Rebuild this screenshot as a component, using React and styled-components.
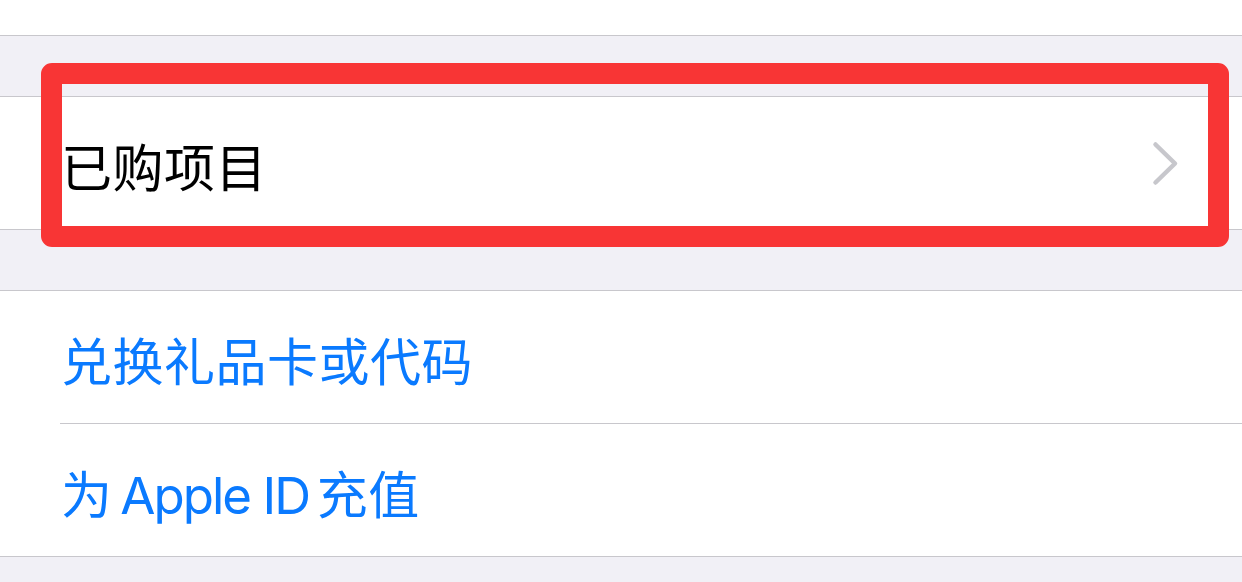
import React from "react";
import styled, { createGlobalStyle } from "styled-components";

const GlobalStyle = createGlobalStyle`
	html, body {
		margin: 0;
		padding: 0;
		background: #f1f0f6;
		font-family: "Inter", "Noto Sans CJK SC", sans-serif;
	}
`;

const Latin = styled.span`
	letter-spacing: -2px;
	word-spacing: normal;
`;

const rows = [
	{ id: "redeem", label: "兑换礼品卡或代码" },
	{
		id: "topup",
		label: (
			<>
				为 <Latin>Apple ID</Latin> 充值
			</>
		),
	},
];

const Chevron = () => (
	<svg width="27" height="45" viewBox="0 0 27 45" fill="none">
		<polyline
			points="3.5,3.5 23,22.5 3.5,41.5"
			stroke="#c7c7cc"
			strokeWidth="4.5"
			strokeLinecap="round"
			strokeLinejoin="round"
		/>
	</svg>
);

const App = () => {
	return (
		<Page>
			<GlobalStyle />
			<TopStub />
			<Gap />
			<Group>
				<Highlight />
				<Row>
					<Label>已购项目</Label>
					<Chevron />
				</Row>
			</Group>
			<Gap />
			<Group>
				{rows.map((row, i) => (
					<Row key={row.id} $divider={i > 0}>
						<Label $link>{row.label}</Label>
					</Row>
				))}
			</Group>
		</Page>
	);
};

const Page = styled.div`
	width: 1242px;
	height: 582px;
	overflow: hidden;
	background: #f1f0f6;
`;

const TopStub = styled.div`
	height: 35px;
	background: #ffffff;
	border-bottom: 1px solid #c8c7cc;
`;

const Gap = styled.div`
	height: 60px;
`;

const Group = styled.div`
	position: relative;
	background: #ffffff;
	border-top: 1px solid #c8c7cc;
	border-bottom: 1px solid #c8c7cc;
`;

const Row = styled.div`
	position: relative;
	height: 132px;
	display: flex;
	align-items: center;
	justify-content: space-between;
	padding: 0 63px 0 61px;
	box-sizing: border-box;
	${(p) =>
		p.$divider &&
		`
		&::before {
			content: "";
			position: absolute;
			left: 60px;
			right: 0;
			top: -1px;
			height: 1px;
			background: #c8c7cc;
		}
		margin-top: 1px;
	`}
`;

const Label = styled.div`
	font-size: 51px;
	line-height: 1;
	padding-top: 10px;
	letter-spacing: 0.5px;
	word-spacing: -7px;
	color: ${(p) => (p.$link ? "#0a7aff" : "#000000")};
`;

const Highlight = styled.div`
	position: absolute;
	left: 41px;
	top: -34px;
	width: 1188px;
	height: 184px;
	box-sizing: border-box;
	border: 21px solid #f83535;
	border-radius: 11px;
	z-index: 2;
	pointer-events: none;
`;

export default App;
